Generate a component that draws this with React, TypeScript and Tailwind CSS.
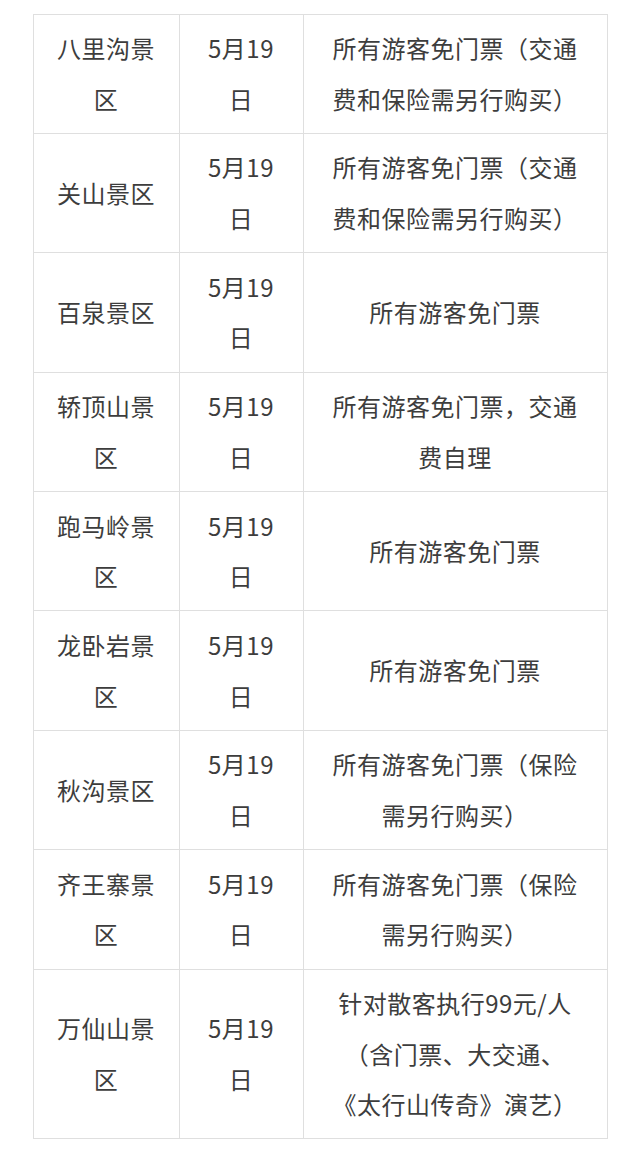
import type { ReactNode } from "react";

const rows: { name: string; date: string; note: ReactNode }[] = [
  { name: "八里沟景区", date: "5月19日", note: "所有游客免门票（交通费和保险需另行购买）" },
  { name: "关山景区", date: "5月19日", note: "所有游客免门票（交通费和保险需另行购买）" },
  { name: "百泉景区", date: "5月19日", note: "所有游客免门票" },
  { name: "轿顶山景区", date: "5月19日", note: "所有游客免门票，交通费自理" },
  { name: "跑马岭景区", date: "5月19日", note: "所有游客免门票" },
  { name: "龙卧岩景区", date: "5月19日", note: "所有游客免门票" },
  { name: "秋沟景区", date: "5月19日", note: "所有游客免门票（保险需另行购买）" },
  { name: "齐王寨景区", date: "5月19日", note: "所有游客免门票（保险需另行购买）" },
  {
    name: "万仙山景区",
    date: "5月19日",
    note: (
      <>
        针对散客执行99元/人
        <br />
        （含门票、大交通、
        <br />
        《太行山传奇》演艺）
      </>
    ),
  },
];

export default function App() {
  return (
    <div
      className="min-h-[1155px] w-[640px] bg-white pt-[13.5px] pl-[32.5px]"
      style={{ fontFamily: '"Noto Sans CJK SC", "Noto Sans", sans-serif' }}
    >
      <table className="table-fixed border-collapse text-center text-[24px] leading-[50.6px] tracking-[0.5px] text-[#3d3d3d]">
        <colgroup>
          <col className="w-[146px]" />
          <col className="w-[124px]" />
          <col className="w-[304px]" />
        </colgroup>
        <tbody>
          {rows.map((r, i) => (
            <tr key={i}>
              <td className="border border-[#dfdfdf] px-[20px] py-[8.6px] align-middle">{r.name}</td>
              <td className="border border-[#dfdfdf] px-[20px] py-[8.6px] align-middle">{r.date}</td>
              <td className="border border-[#dfdfdf] px-[20px] py-[8.6px] align-middle">{r.note}</td>
            </tr>
          ))}
        </tbody>
      </table>
    </div>
  );
}
